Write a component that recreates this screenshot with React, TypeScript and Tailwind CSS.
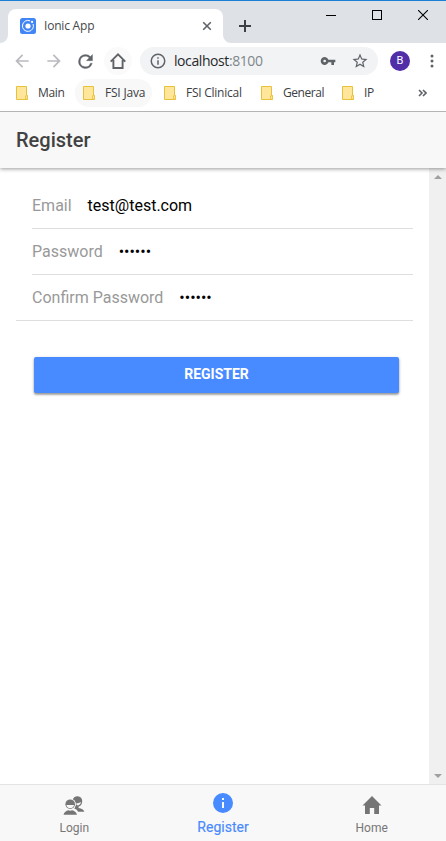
import React from "react";

const UI = "font-['Open_Sans','Noto_Sans',sans-serif]";

function TabFoot({ flip = false }: { flip?: boolean }) {
  return (
    <svg width="8" height="8" viewBox="0 0 8 8" className={flip ? "-scale-x-100" : ""}>
      <path d="M8 0V8H0A8 8 0 0 0 8 0Z" fill="#fff" />
    </svg>
  );
}

function TabStrip() {
  return (
    <div className="flex h-[43px] border-t border-[#1a80d6] bg-[#dee1e6]">
      <div className="flex items-end">
        <TabFoot />
      </div>
      <div className="mt-2 flex h-[34px] w-[215px] items-center rounded-t-lg bg-white pr-[11px] pl-3">
        <svg width="16" height="16" viewBox="0 0 16 16" className="shrink-0">
          <rect width="16" height="16" rx="2.5" fill="#4286f5" />
          <path d="M10.2 2.9A5.5 5.5 0 1 0 13.1 6" fill="none" stroke="#fff" strokeWidth="1" />
          <circle cx="8" cy="8" r="2.6" fill="#fff" />
          <circle cx="12.1" cy="3.9" r="1.1" fill="#fff" />
        </svg>
        <span className="ml-2 flex-1 text-xs leading-4 tracking-[-0.2px] text-[#45474a]">Ionic App</span>
        <svg width="10" height="10" viewBox="0 0 10 10" stroke="#5f6368" strokeWidth="1.6">
          <path d="M1.2 1.2 8.8 8.8M8.8 1.2 1.2 8.8" />
        </svg>
      </div>
      <div className="flex items-end">
        <TabFoot flip />
      </div>
      <svg width="12" height="12" viewBox="0 0 12 12" stroke="#3c4043" strokeWidth="2" className="mt-[19px] ml-2">
        <path d="M6 0V12M0 6H12" />
      </svg>
      <div className="mt-[9px] ml-auto flex gap-9 pr-[18px]">
        <svg width="10" height="10" viewBox="0 0 10 10" stroke="#000">
          <path d="M0 5.5H10" />
        </svg>
        <svg width="10" height="10" viewBox="0 0 10 10" stroke="#000" fill="none">
          <rect x=".5" y=".5" width="9" height="9" />
        </svg>
        <svg width="10" height="10" viewBox="0 0 10 10" stroke="#000" strokeWidth="1.1">
          <path d="M0 0 10 10M10 0 0 10" />
        </svg>
      </div>
    </div>
  );
}

function Toolbar() {
  return (
    <div className="flex h-9 items-center pl-3">
      <svg width="20" height="20" viewBox="0 0 24 24" fill="#b9bbbe">
        <path d="M20 11H7.83l5.59-5.59L12 4l-8 8 8 8 1.41-1.41L7.83 13H20v-2z" />
      </svg>
      <svg width="20" height="20" viewBox="0 0 24 24" fill="#b9bbbe" className="ml-3">
        <path d="m12 4-1.41 1.41L16.17 11H4v2h12.17l-5.58 5.59L12 20l8-8z" />
      </svg>
      <svg width="21" height="21" viewBox="0 0 24 24" fill="#5f6368" stroke="#5f6368" strokeWidth=".4" className="ml-[11px]">
        <path d="M17.65 6.35A7.96 7.96 0 0 0 12 4a8 8 0 1 0 7.73 10h-2.08A6 6 0 1 1 12 6c1.66 0 3.14.69 4.22 1.78L13 11h7V4l-2.35 2.35z" />
      </svg>
      <div className="ml-2 flex size-7 items-center justify-center rounded-full bg-[#fafafa]">
        <svg width="16" height="16" viewBox="0 0 16 16" fill="none" stroke="#5f6368" strokeWidth="1.9">
          <path d="M.7 8.6 8 1.4l7.3 7.2M3.4 7V15H12.6V7" />
        </svg>
      </div>
      <div className="ml-2 flex h-7 w-[238px] items-center rounded-full bg-[#f1f3f4] pl-[9px]">
        <svg width="18" height="18" viewBox="0 0 24 24" fill="#5f6368" className="shrink-0">
          <path d="M11 17h2v-6h-2v6zm1-15a10 10 0 1 0 0 20 10 10 0 0 0 0-20zm0 18a8 8 0 1 1 0-16 8 8 0 0 1 0 16zM11 9h2V7h-2v2z" />
        </svg>
        <span className="ml-[7px] flex-1 text-[14px] leading-5 tracking-[-0.42px] text-[#27292c]">
          localhost<span className="text-[#80868b]">:8100</span>
        </span>
        <svg width="16" height="16" viewBox="0 0 24 24" fill="#5f6368" className="shrink-0">
          <path d="M12.65 10A6 6 0 1 0 12.65 14H17v4h4v-4h2v-4H12.65zM7 14a2 2 0 1 1 0-4 2 2 0 0 1 0 4z" />
        </svg>
        <svg width="18" height="18" viewBox="0 0 24 24" fill="#5f6368" className="mr-[9px] ml-[15px] shrink-0">
          <path d="m22 9.24-7.19-.62L12 2 9.19 8.63 2 9.24l5.46 4.73L5.82 21 12 17.27 18.18 21l-1.63-7.03L22 9.24zM12 15.4l-3.76 2.27 1-4.28-3.32-2.88 4.38-.38L12 6.1l1.71 4.04 4.38.38-3.32 2.88 1 4.28L12 15.4z" />
        </svg>
      </div>
      <div className="ml-3 flex size-5 items-center justify-center rounded-full bg-[#512da8] font-['Roboto',sans-serif] text-[11px] text-white">
        B
      </div>
      <svg width="4" height="14" viewBox="0 0 4 14" fill="#5f6368" className="ml-5">
        <circle cx="2" cy="2" r="1.5" />
        <circle cx="2" cy="7" r="1.5" />
        <circle cx="2" cy="12" r="1.5" />
      </svg>
    </div>
  );
}

const bookmarks = [
  { label: "Main", box: "w-[67px]", track: "tracking-[-0.3px]" },
  { label: "FSI Java", box: "w-[77px] rounded-full bg-[#f8f8f9] mr-1", track: "tracking-[-0.2px]" },
  { label: "FSI Clinical", box: "w-[97px]", track: "tracking-[-0.25px]" },
  { label: "General", box: "w-[81px]", track: "tracking-[-0.45px]" },
  { label: "IP", box: "w-[60px]", track: "tracking-[-0.3px]" },
];

function Bookmarks() {
  return (
    <div className="flex h-[33px] items-start border-b border-[#b4b4b4] pl-2">
      {bookmarks.map((b) => (
        <div key={b.label} className={`flex h-7 shrink-0 items-center pl-2 ${b.box}`}>
          <svg width="12" height="14" viewBox="0 0 12 14" fill="#ffe69b" stroke="#e8c13c" className="shrink-0">
            <path d="M.5.5H10.5V9.5H11.5V13.5H.5Z" />
            <path d="M9.5 13V9.8H11.5V13.2Z" strokeWidth=".8" />
          </svg>
          <span className={`ml-2.5 whitespace-nowrap text-xs leading-4 text-[#3c4043] ${b.track}`}>{b.label}</span>
        </div>
      ))}
      <svg width="9" height="8" viewBox="0 0 9 8" fill="none" stroke="#5f6368" strokeWidth="1.6" className="mt-[10px] ml-[24px]">
        <path d="M1 1 4 4 1 7M5 1 8 4 5 7" />
      </svg>
    </div>
  );
}

function Field({ label, value, last = false }: { label: string; value: string; last?: boolean }) {
  return (
    <div className={last ? "border-b border-[#dedede] pl-4" : "pl-4"}>
      <div className={`flex h-[45px] items-center gap-4 text-base leading-5 ${last ? "" : "box-content border-b border-[#dedede]"}`}>
        <span className="text-[#999]">{label}</span>
        <span className="text-black">{value}</span>
      </div>
    </div>
  );
}

export default function App() {
  return (
    <div className="flex h-[841px] w-[446px] flex-col overflow-hidden bg-white font-['Roboto',sans-serif]">
      <div className={`relative z-20 bg-white ${UI}`}>
        <TabStrip />
        <Toolbar />
        <Bookmarks />
      </div>
      <header className="z-10 flex h-14 shrink-0 items-center bg-[#f8f8f8] pl-4 text-xl font-medium text-[#424242] shadow-[0_1px_4px_rgba(0,0,0,0.4)]">
        Register
      </header>
      <div className="flex min-h-0 flex-1">
        <main className="flex-1 pt-[15px] pr-4 pl-4">
          <Field label="Email" value="test@test.com" />
          <Field label="Password" value="••••••" />
          <Field label="Confirm Password" value="••••••" last />
          <button className="mt-9 ml-[18px] block h-9 w-[365px] rounded-[2px] bg-[#488aff] pb-0.5 text-sm font-bold text-white shadow-[0_2px_2px_rgba(0,0,0,0.22),0_1px_3px_rgba(0,0,0,0.3)]">
            REGISTER
          </button>
        </main>
        <div className="flex w-[17px] flex-col items-center justify-between bg-[#f0f0f0] pt-[7px] pb-[6px]">
          <svg width="8" height="4" viewBox="0 0 8 4" fill="#a0a0a0">
            <path d="M4 0 8 4H0Z" />
          </svg>
          <svg width="8" height="4" viewBox="0 0 8 4" fill="#a0a0a0">
            <path d="M0 0H8L4 4Z" />
          </svg>
        </div>
      </div>
      <nav className="grid h-[57px] shrink-0 grid-cols-3 border-t border-[#e4e4e4] bg-[#f8f8f8] text-xs text-[#777]">
        <div className="flex flex-col items-center">
          <svg width="22" height="19" viewBox="0 0 22 19" fill="#757575" className="mt-[11px]">
            <path d="M9.6 4.6A4.7 4.7 0 0 1 19.2 5.3C19.2 8 17.8 10.2 15.6 10.6V12C18.5 12.7 21 13.7 21.4 15.7H15C14.2 13.8 12.8 12.9 11.2 12.4 12.3 11 12.8 9 12.5 7.1 12.1 6 11 5 9.6 4.6Z" />
            <path d="M13 7.4Q16 7.3 18 6Q17.8 9 15.2 9.5Q13.4 9.2 13 7.4Z" fill="#f8f8f8" />
            <circle cx="7.2" cy="8.2" r="5.6" fill="#f8f8f8" />
            <circle cx="7.2" cy="8.2" r="4.8" />
            <path d="M3.4 9H11C10.6 11.2 9 12.3 7.2 12.3S3.8 11.2 3.4 9Z" fill="#f8f8f8" />
            <path d="M.5 18.8C1 15.9 3.5 14.8 5.2 14.2L7.2 14.8 9.2 14.2C11 14.8 13.5 15.9 14 18.8Z" />
          </svg>
          <span className="mt-[5px] leading-4">Login</span>
        </div>
        <div className="flex flex-col items-center text-[#488aff]">
          <svg width="20" height="20" viewBox="0 0 20 20" className="mt-2">
            <circle cx="10" cy="10" r="10" fill="#488aff" />
            <path d="M9 5H11V7H9ZM9 9H11V15H9Z" fill="#f8f8f8" />
          </svg>
          <span className="mt-[6px] text-sm leading-4 [-webkit-text-stroke:0.15px_#488aff]">Register</span>
        </div>
        <div className="flex flex-col items-center">
          <svg width="20" height="18" viewBox="0 0 20 18" fill="#757575" className="mt-[11px]">
            <path d="M7.8 18V12H12.2V18H17V9.5H19.5L10 0 .5 9.5H3V18Z" />
          </svg>
          <span className="mt-[6px] leading-4">Home</span>
        </div>
      </nav>
    </div>
  );
}
